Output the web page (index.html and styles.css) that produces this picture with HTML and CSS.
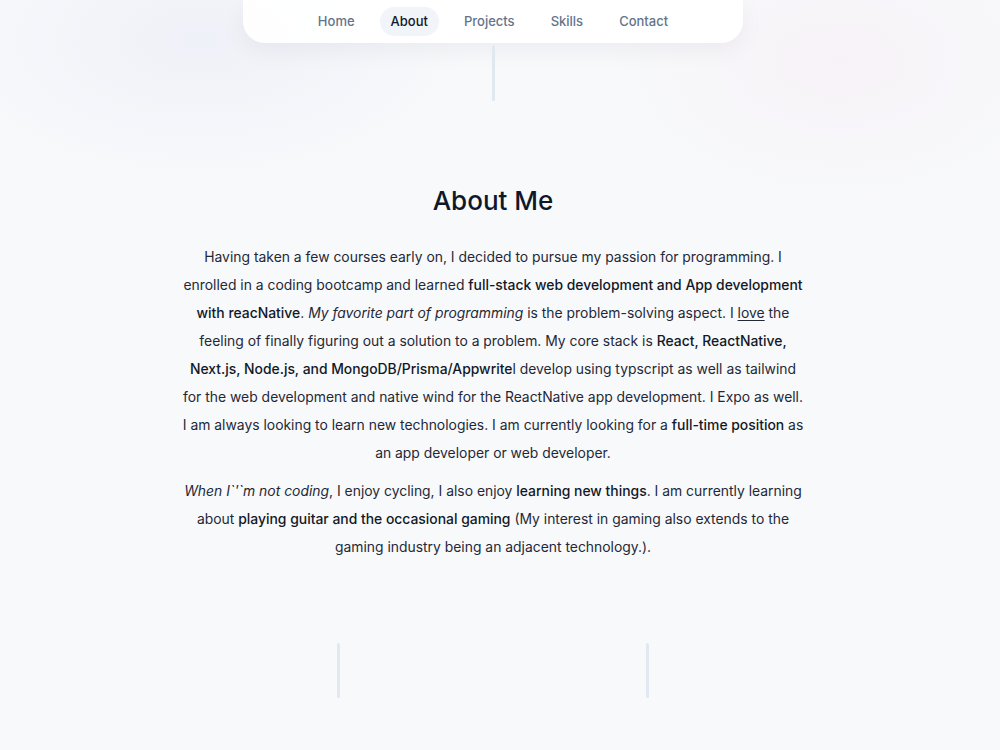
FILE: index.html
```html
<!DOCTYPE html>
<html lang="en">
<head>
<meta charset="utf-8">
<title>About Me</title>
<link rel="stylesheet" href="styles.css">
</head>
<body>
<div class="page">
  <header class="header">
    <nav class="nav">
      <a class="nav-link" href="#home">Home</a>
      <a class="nav-link active" href="#about">About</a>
      <a class="nav-link" href="#projects">Projects</a>
      <a class="nav-link" href="#skills">Skills</a>
      <a class="nav-link" href="#contact">Contact</a>
    </nav>
    <div class="divider"></div>
  </header>

  <section class="about" id="about">
    <h2 class="title">About Me</h2>
    <p class="text">Having taken a few courses early on, I decided to pursue my passion for programming. I enrolled in a coding bootcamp and learned <b>full-stack web development and App development with reacNative</b>. <i>My favorite part of programming</i> is the problem-solving aspect. I <u>love</u> the feeling of finally figuring out a solution to a problem. My core stack is <b>React, ReactNative, Next.js, Node.js, and MongoDB/Prisma/Appwrite</b>l develop using typscript as well as tailwind for the web development and native wind for the ReactNative app development. I Expo as well. I am always looking to learn new technologies. I am currently looking for a <b>full-time position</b> as an app developer or web developer.</p>
    <p class="text"><i>When I`'`m not coding</i>, I enjoy cycling, I also enjoy <b>learning new things</b>. I am currently learning about <b>playing guitar and the occasional gaming</b> (My interest in gaming also extends to the gaming industry being an adjacent technology.).</p>
  </section>

  <div class="bottom-lines">
    <div class="vline"></div>
    <div class="vline"></div>
  </div>
</div>
</body>
</html>
```
FILE: styles.css
```css
* { box-sizing: border-box; }
html, body { margin: 0; padding: 0; }
body {
  font-family: Inter, "Noto Sans", sans-serif;
  color: #111827;
  background:
    radial-gradient(ellipse 320px 200px at 840px 60px, rgba(245, 232, 242, 0.4), transparent 70%),
    radial-gradient(ellipse 380px 200px at 200px 40px, rgba(232, 234, 246, 0.55), transparent 70%),
    #f8f9fb;
  min-height: 750px;
  overflow: hidden;
}
.page {
  width: 986px;
  display: flex;
  flex-direction: column;
  align-items: center;
}
.header {
  display: flex;
  flex-direction: column;
  align-items: center;
}
.nav {
  width: 500px;
  height: 43px;
  background: rgba(255, 255, 255, 0.92);
  border-radius: 0 0 22px 22px;
  box-shadow: 0 8px 24px rgba(15, 23, 42, 0.05);
  border: 1px solid rgba(255,255,255,0.9);
  display: flex;
  justify-content: center;
  align-items: center;
  gap: 14px;
}
.nav-link {
  font-size: 13px;
  font-weight: 500;
  color: #64748b;
  text-decoration: none;
  padding: 7px 11px;
  border-radius: 16px;
  line-height: 15px;
}
.nav-link.active {
  color: #111827;
  background: #f1f4f8;
}
.divider {
  width: 3px;
  height: 56px;
  margin-top: 2px;
  background: #e2e8f0;
  border-radius: 2px;
}
.about {
  margin-top: 84px;
  width: 622px;
  text-align: center;
}
.title {
  font-size: 26px;
  font-weight: 500;
  margin: 0 0 26px;
  line-height: 32px;
  color: #0f172a;
}
.text {
  font-size: 13.9px;
  line-height: 28px;
  margin: 0 0 10px;
  color: #1f2937;
}
.text b { font-weight: 500; color: #111827; }
.text u { text-underline-offset: 2px; }
.bottom-lines {
  margin-top: 72px;
  width: 312px;
  display: flex;
  justify-content: space-between;
}
.vline {
  width: 3px;
  height: 55px;
  background: #e2e8f0;
  border-radius: 2px;
}
```
